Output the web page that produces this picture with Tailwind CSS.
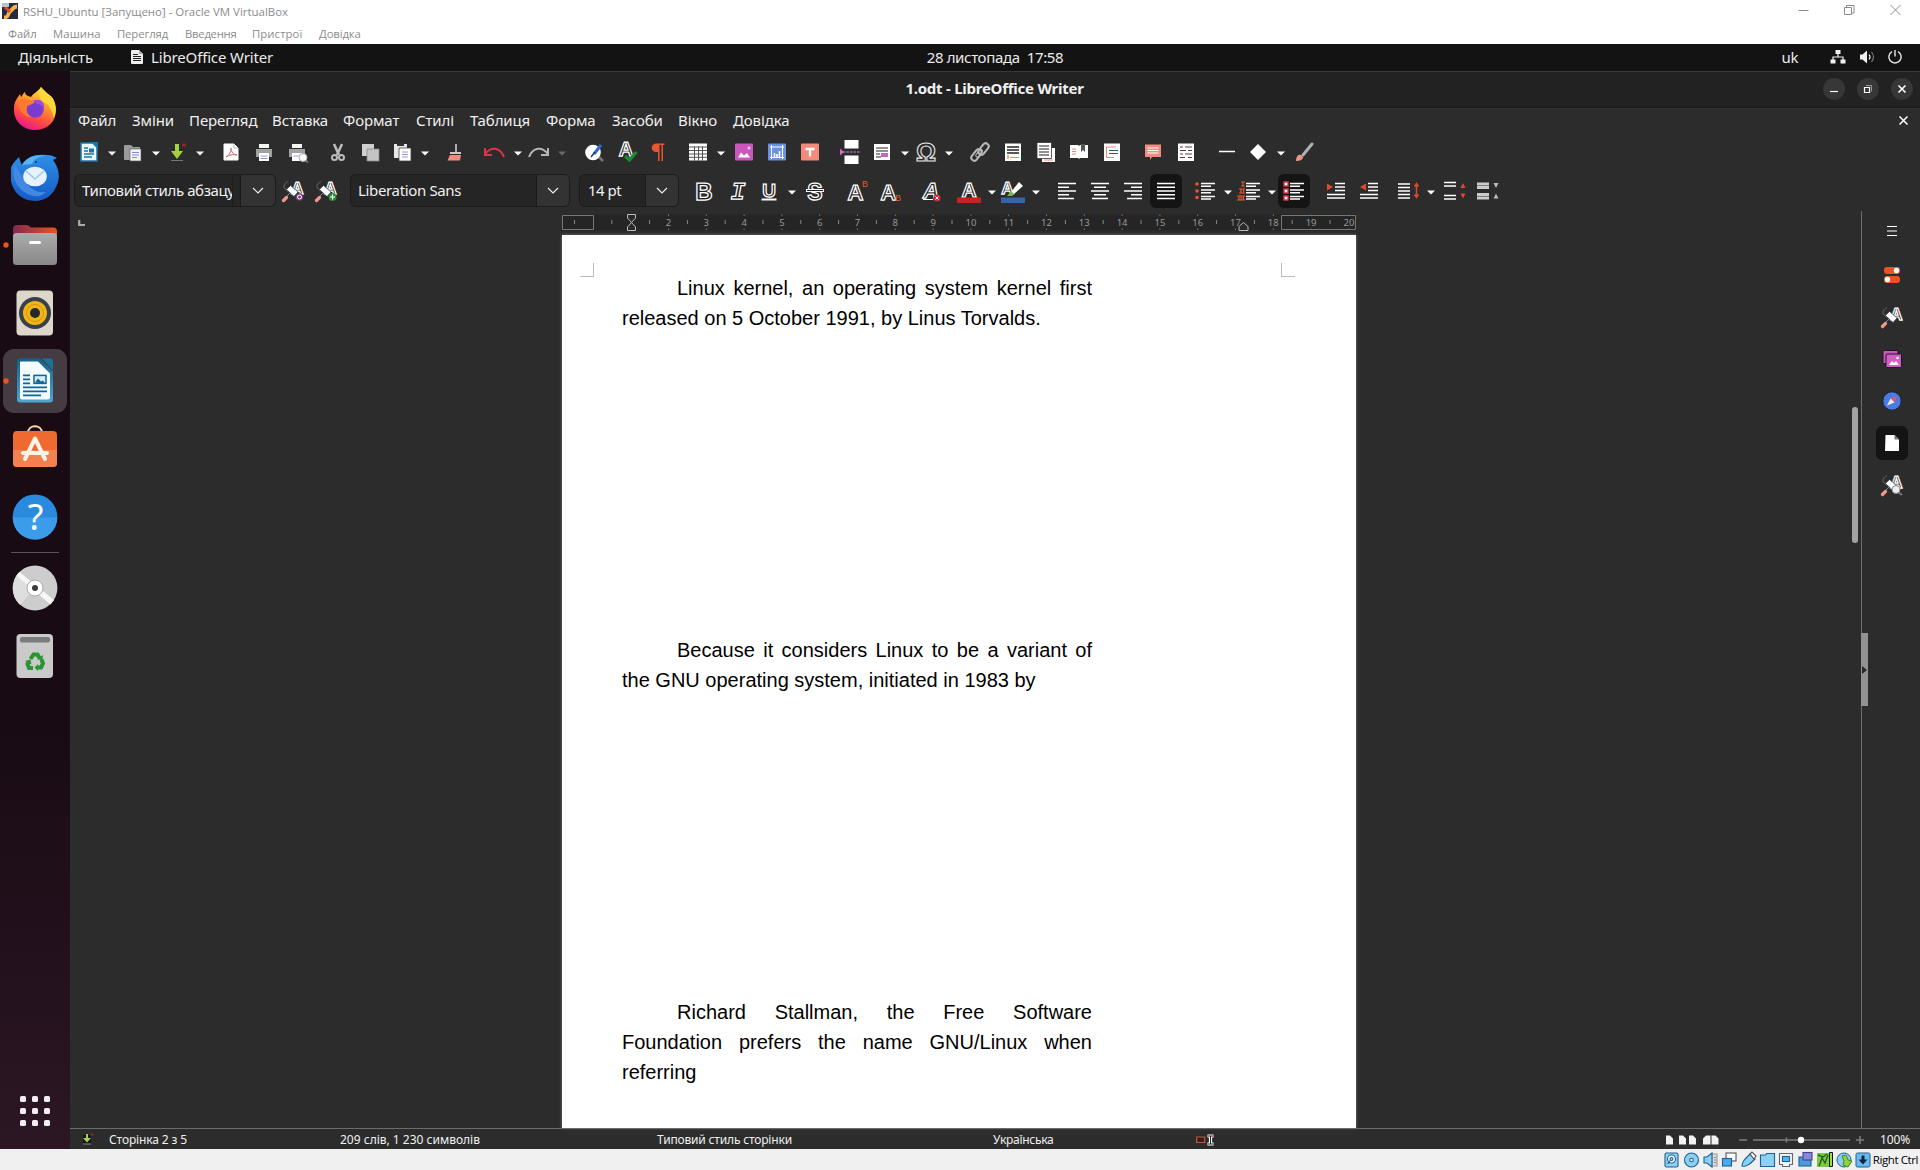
<!DOCTYPE html>
<html lang="uk">
<head>
<meta charset="utf-8">
<title>1.odt - LibreOffice Writer</title>
<script src="https://cdn.jsdelivr.net/npm/@tailwindcss/browser@4"></script>
</head>
<body class="w-[1920px] h-[1170px] overflow-hidden bg-[#2c2c2c] font-['Noto_Sans',sans-serif] flex flex-col">

<!-- Host window -->
<header class="h-[44px] shrink-0 bg-white text-[#8c8c8c] font-['Open_Sans',sans-serif] flex justify-between">
  <div>
    <div class="h-[24px] flex items-center pl-[2px] gap-[5px] text-[11.45px]">
      <svg class="w-4 h-4 -mt-[2px]" viewBox="0 0 16 16"><path d="M0 0h16v16H0z" fill="#26293f"/><path d="M2 14.500c6 0 3-4 6-6s3-5 7-5" fill="none" stroke="#f9b24a" stroke-width="3.800"/><path d="M3 4l5 5" stroke="#d9502c" stroke-width="3"/><path d="M0 0h7v4H0z" fill="#b9c3cf"/></svg>
      <span>RSHU_Ubuntu [Запущено] - Oracle VM VirtualBox</span>
    </div>
    <nav class="h-5 flex items-center pl-[8px] text-[11.3px] -tracking-[0.1px]">
      <span class="w-[45px]">Файл</span><span class="w-[64px] tracking-[0.1px]">Машина</span><span class="w-[68px]">Перегляд</span><span class="w-[67px] -tracking-[0.25px]">Введення</span><span class="w-[67px] tracking-[0.1px]">Пристрої</span><span>Довідка</span>
    </nav>
  </div>
  <div class="flex gap-[35px] pr-[19px] pt-[4px]">
    <svg class="w-[11px] h-[12px]" viewBox="0 0 11 12"><path d="M0.5 6.500h10" stroke="#8c8c8c"/></svg>
    <svg class="w-[11px] h-[12px]" viewBox="0 0 11 12"><path d="M.5 3.500h7v7h-7zM2.500 3.500v-2h7.500v7.500h-2.500" fill="none" stroke="#8c8c8c"/></svg>
    <svg class="w-[11px] h-[12px]" viewBox="0 0 11 12"><path d="M.5 1l10 10M10.500 1l-10 10" stroke="#8c8c8c"/></svg>
  </div>
</header>

<!-- GNOME top bar -->
<div class="h-[27px] shrink-0 bg-[#131313] text-[#ebebeb] text-[15px] grid grid-cols-[919px_152px_849px] items-center pb-[1px]">
  <div class="flex items-center pl-[18px]">
    <span class="w-[113px] -tracking-[0.1px]">Діяльність</span>
    <svg class="w-3 h-[14px] mr-2" viewBox="0 0 12 14"><path d="M0 1q0-1 1-1h7l4 4v9q0 1-1 1H1q-1 0-1-1z" fill="#eee"/><path d="M8 0v4h4" fill="#aaa"/><path d="M2 4.500h5M2 6.500h8M2 8.500h8M2 10.500h8" stroke="#222"/></svg>
    <span class="-tracking-[0.15px]">LibreOffice Writer</span>
  </div>
  <span class="text-center whitespace-pre -tracking-[0.35px]">28 листопада  17:58</span>
  <div class="flex items-center justify-end pr-[18px]">
    <span class="mr-[32px] -tracking-[0.4px]">uk</span>
    <svg class="w-4 h-[14px] mr-[14px]" viewBox="0 0 16 14"><path d="M5.500 0h5v4h-5zM0.500 9.500h5v4h-5zM10.500 9.500h5v4h-5z" fill="#f0f0f0"/><path d="M8 4v3M3 10V7h10v3" fill="none" stroke="#f0f0f0" stroke-width="1.200"/></svg>
    <svg class="w-[15px] h-[14px] mr-[13px]" viewBox="0 0 15 14"><path d="M0 4.500h2.500L7 .5v13L2.500 9.500H0z" fill="#f0f0f0"/><path d="M9 4.500q2 2.500 0 5" fill="none" stroke="#f0f0f0" stroke-width="1.200"/><path d="M11.500 2q4 5 0 10" fill="none" stroke="#777" stroke-width="1.200"/></svg>
    <svg class="w-[14px] h-[14px]" viewBox="0 0 14 14"><path d="M4 1.600a6.100 6.100 0 1 0 6 0M7 0v6.500" fill="none" stroke="#e8e8e8" stroke-width="1.400"/></svg>
  </div>
</div>

<div class="h-[1078px] shrink-0 flex">
  <!-- Dock -->
  <aside class="w-[70px] shrink-0 bg-linear-to-b from-[#180b13] from-60% to-[#2c1625] flex flex-col items-center">
    <svg class="w-[70px] h-[1078px]" viewBox="0 71 70 1078">
      <defs>
        <linearGradient id="ff" x1=".8" y1="0" x2=".35" y2="1"><stop offset="0" stop-color="#fff04a"/><stop offset=".4" stop-color="#ff9a26"/><stop offset=".75" stop-color="#ff4648"/><stop offset="1" stop-color="#e8188a"/></linearGradient>
        <linearGradient id="tb" x1="0" y1="0" x2="0" y2="1"><stop offset="0" stop-color="#2f8fe8"/><stop offset="1" stop-color="#145bc4"/></linearGradient>
        <linearGradient id="fl" x1="0" y1="0" x2="1" y2="0"><stop offset="0" stop-color="#7f2a50"/><stop offset="1" stop-color="#e95420"/></linearGradient>
        <linearGradient id="gr" x1="0" y1="0" x2="0" y2="1"><stop offset="0" stop-color="#ababab"/><stop offset="1" stop-color="#888"/></linearGradient>
        <linearGradient id="wr" x1="0" y1="0" x2="0" y2="1"><stop offset="0" stop-color="#155f89"/><stop offset="1" stop-color="#4ea6d0"/></linearGradient>
      </defs>
      <g>
        <path d="M41 87c2 3 8 8 11 10 5 7 5 17 1 24-4 6-11 9-18 9-12 0-21-9-21-20 0-6 1-9 4-13l2-3 1 3c2-2 2-4 4-5 0 2 1 3 3 4l3 1c2-4 7-5 10-10z" fill="url(#ff)"/>
        <path d="M41 87c2 3 9 8 12 12 3 6 4 12 1 19-2-8-5-14-12-17-3-4-4-9-1-14z" fill="#ffd93a"/>
        <circle cx="35" cy="109" r="8.800" fill="#7a3bd0"/><path d="M36 100c6-1 9 4 8 9-2-4-5-5-8-5z" fill="#a04ad8"/>
        <path d="M18 102c3-4 7-3 11-2 2 1 4 1 6 1-1 4-6 3-8 6-1 3 0 8 5 10-7 1-13-5-14-15z" fill="#ff7a2c"/>
      </g>
      <g>
        <path d="M11 168c1-4 5-8 8-11 1 4 2 6 3 8 4-6 10-10 17-10 7-1 14 0 18 3l-4 2c6 8 8 18 3 27-4 9-12 14-21 14-13 0-22-9-24-20z" fill="url(#tb)"/>
        <path d="M22 165c5-9 16-11 24-9-7 0-12 3-14 8z" fill="#57b4f5"/>
        <path d="M15 165c-5 14 4 28 19 31 5 1 9-1 12-4-8 1-14-2-19-8z" fill="#4488e4"/>
        <ellipse cx="35" cy="176.500" rx="11.800" ry="9.800" fill="#e6f3ff"/><path d="M26 171l9 8 9-8" fill="none" stroke="#9fc6ea" stroke-width="1.500"/><circle cx="36" cy="162" r="1" fill="#0b2e6a"/>
      </g>
      <path d="M13 229q0-4 4-4h9q2 0 3 1l2 1.500h22q4 0 4 4v10H13z" fill="url(#fl)"/><rect x="13" y="233" width="44" height="32" rx="3.500" fill="url(#gr)"/><path d="M30.500 242.500h9" stroke="#fff" stroke-width="3" stroke-linecap="round"/>
      <rect x="16.500" y="290.500" width="36.500" height="45" rx="4" fill="#dcd6cb"/><circle cx="35" cy="313" r="16" fill="#39404a"/><circle cx="35" cy="313" r="12" fill="#f0b619"/><circle cx="35" cy="313" r="5" fill="#222a2b"/><circle cx="35" cy="313" r="8.500" fill="none" stroke="#c99108" stroke-width=".8"/>
      <rect x="3" y="349" width="64" height="64" rx="11" fill="#453b42"/>
      <g transform="translate(0 -.6)"><path d="M20 359h20l13 13v28q0 3-3 3H20q-3 0-3-3v-38q0-3 3-3z" fill="url(#wr)"/><path d="M42 359h8q3 0 3 3v9z" fill="#1c7299"/><path d="M20 363q0-1 1-1h17l12 12v24q0 2-2 2H22q-2 0-2-2z" fill="#f2fbff"/><path d="M23 376h7M23 380h7M23 384h7M23 388h24M23 392h24M23 396h18" stroke="#0f6795" stroke-width="1.700"/><rect x="34" y="376" width="12" height="8" fill="#d3ecfa" stroke="#0f6795" stroke-width="1.500"/><path d="M35 383l3-4 3 3 2-1 2 3z" fill="#0f6795"/></g>
      <path d="M28 433c0-9 14-9 14 0" fill="none" stroke="#f7dcb7" stroke-width="2"/><rect x="13" y="431" width="44" height="36" rx="4" fill="#ee6a30"/><path d="M13 450h44v13q0 4-4 4H17q-4 0-4-4z" fill="#f3804f"/><path d="M25 459L35 438.500l10 20.500M23 453h24" fill="none" stroke="#fff3e6" stroke-width="4" stroke-linecap="round" stroke-linejoin="round"/>
      <circle cx="35" cy="516.700" r="22.300" fill="#2a8ade"/><path d="M12.700 517.500h44.600a22.300 22.300 0 0 1-44.600 0z" fill="#3b9dea"/><text x="35.500" y="530" text-anchor="middle" font-size="36" fill="#fff" class="font-['Noto_Sans',sans-serif]">?</text>
      <path d="M11 552.500h48" stroke="#5c5258"/>
      <circle cx="35" cy="588" r="22.400" fill="#cdcdcd"/><path d="M18 573.500L35 588 20 605a22.400 22.400 0 0 1-7-17q0-8 5-14.500z" fill="#dedede"/><path d="M16.500 575.500l3-3.500L54 600l-3.500 4.500z" fill="#f7f7f7"/><circle cx="35" cy="588" r="8" fill="#fff" stroke="#aaa89f"/><circle cx="35" cy="588" r="3" fill="#3c3c3c"/>
      <rect x="16.500" y="634" width="36.500" height="44" rx="4" fill="#cacaca"/><rect x="20" y="637" width="30" height="5.500" rx="2" fill="#7c7c7c"/><g fill="none" stroke="#2a9433" stroke-width="4"><path d="M30.500 659l3-4.500h4l2 3.500M41.500 659.500l1.500 4-2 4h-4M33 668h-4l-1.500-4 1.500-2.500"/></g><path d="M37 659.500l5.500.5.5-5zM38 664v7l-3.500-3.500zM25 661l5.500-1.500 1 5z" fill="#2a9433"/>
      <g fill="#e95420"><circle cx="6" cy="245" r="2.700"/><circle cx="6" cy="381" r="2.700"/></g>
      <g fill="#f3eef2"><rect x="20" y="1096" width="6" height="6" rx="1.500"/><rect x="32" y="1096" width="6" height="6" rx="1.500"/><rect x="44" y="1096" width="6" height="6" rx="1.500"/><rect x="20" y="1108" width="6" height="6" rx="1.500"/><rect x="32" y="1108" width="6" height="6" rx="1.500"/><rect x="44" y="1108" width="6" height="6" rx="1.500"/><rect x="20" y="1120" width="6" height="6" rx="1.500"/><rect x="32" y="1120" width="6" height="6" rx="1.500"/><rect x="44" y="1120" width="6" height="6" rx="1.500"/></g>
    </svg>
  </aside>

  <!-- Writer window -->
  <main class="w-[1850px] flex flex-col text-[#f0f0f0]">
    <div class="h-[37px] shrink-0 bg-[#222] border-t border-t-[#383838] border-b border-b-[#191919] grid grid-cols-[1740px_110px] items-center">
      <h1 class="text-center pl-[109px] text-[15px] font-bold -tracking-[0.25px] -mt-[3px]">1.odt - LibreOffice Writer</h1>
      <div class="flex gap-[12px] pl-[13px] -mt-px">
        <svg class="w-[22px] h-[22px]" viewBox="0 0 22 22"><circle cx="11" cy="11" r="11" fill="#373737"/><path d="M7 13.500h8" stroke="#fff" stroke-width="1.200"/></svg>
        <svg class="w-[22px] h-[22px]" viewBox="0 0 22 22"><circle cx="11" cy="11" r="11" fill="#373737"/><path d="M7.500 9.500h5v5h-5z" fill="none" stroke="#fff" stroke-width="1.200"/><path d="M9 7.500h5.500v6" fill="none" stroke="#999"/></svg>
        <svg class="w-[22px] h-[22px]" viewBox="0 0 22 22"><circle cx="11" cy="11" r="11" fill="#373737"/><path d="M7.500 7.500l7 7M14.500 7.500l-7 7" stroke="#fff" stroke-width="1.600"/></svg>
      </div>
    </div>
    <div class="h-[26px] shrink-0 flex items-center justify-between border-t border-t-[#323232] pb-[2px]">
      <nav class="flex pl-[8px] text-[15px] -tracking-[0.12px]">
        <span class="w-[54px]">Файл</span><span class="w-[57px]">Зміни</span><span class="w-[83px]">Перегляд</span><span class="w-[71px]">Вставка</span><span class="w-[73px]">Формат</span><span class="w-[54px]">Стилі</span><span class="w-[76px]">Таблиця</span><span class="w-[66px]">Форма</span><span class="w-[66px]">Засоби</span><span class="w-[55px]">Вікно</span><span>Довідка</span>
      </nav>
      <svg class="w-[9px] h-[9px] mr-[12px]" viewBox="0 0 9 9"><path d="M.5 .5l8 8M8.500 .5l-8 8" stroke="#fff" stroke-width="1.500"/></svg>
    </div>
    <div id="standardBar" class="h-[37px] shrink-0 flex items-center pb-[2px]"></div>
    <div class="h-[40px] shrink-0 flex items-center pb-px pl-[4px]">
      <div class="w-[202px] h-[33px] rounded-md border border-[#1b1b1b] bg-[#252525] flex text-[15px] items-center overflow-hidden">
        <span class="w-[158px] h-full pl-[7px] pt-[5px] leading-[20px] border-r border-[#1b1b1b] whitespace-nowrap overflow-hidden -tracking-[0.4px]">Типовий стиль абзацу</span>
        <span class="w-[8px] h-full border-r border-[#1b1b1b]"></span>
        <span class="flex-1 h-full bg-[#333] flex items-center justify-center"><svg class="w-3 h-2" viewBox="0 0 12 8"><path d="M1 1l5 5 5-5" fill="none" stroke="#eee" stroke-width="1.200"/></svg></span>
      </div>
      <div id="styleButtons" class="flex w-[74px] items-center"></div>
      <div class="w-[220px] h-[33px] rounded-md border border-[#1b1b1b] bg-[#252525] flex text-[15px] items-center overflow-hidden">
        <span class="w-[185px] pl-[7px] -tracking-[0.35px]">Liberation Sans</span>
        <span class="flex-1 h-full bg-[#333] border-l border-[#1b1b1b] flex items-center justify-center"><svg class="w-3 h-2" viewBox="0 0 12 8"><path d="M1 1l5 5 5-5" fill="none" stroke="#eee" stroke-width="1.200"/></svg></span>
      </div>
      <div class="ml-[9px] w-[100px] h-[33px] rounded-md border border-[#1b1b1b] bg-[#252525] flex text-[15px] items-center overflow-hidden">
        <span class="w-[65px] pl-[8px] -tracking-[0.5px]">14 pt</span>
        <span class="flex-1 h-full bg-[#333] border-l border-[#1b1b1b] flex items-center justify-center"><svg class="w-3 h-2" viewBox="0 0 12 8"><path d="M1 1l5 5 5-5" fill="none" stroke="#eee" stroke-width="1.200"/></svg></span>
      </div>
      <div id="formatBar" class="flex items-center"></div>
    </div>

    <div class="h-[917px] shrink-0 flex">
      <div class="w-[1791px] shrink-0 flex">
        <svg class="w-[492px] h-[20px] shrink-0 " viewBox="70 211 492 20"><path d="M79.200 220v5H85" fill="none" stroke="#aaa" stroke-width="2.200"/></svg>
        <div class="w-[794px] shrink-0 flex flex-col">
          <svg id="ruler" class="w-[794px] h-[24px] shrink-0" viewBox="562 211 794 24"></svg>
          <article class="flex-1 bg-white text-black font-['Liberation_Sans',Arial,sans-serif] text-[20px] leading-[30px] overflow-hidden shadow-[0_0_3px_#777]">
            <div class="flex justify-between pt-[28px] px-[18px]">
              <span class="w-[14px] h-[14px] border-r border-b border-[#bbb]"></span>
              <span class="w-[14px] h-[14px] border-l border-b border-[#bbb] mr-[43px]"></span>
            </div>
            <p class="ml-[60px] w-[470px] h-[362px] -mt-[4px] indent-[55px] text-justify">Linux kernel, an operating system kernel first released on 5 October 1991, by Linus Torvalds.</p>
            <p class="ml-[60px] w-[470px] h-[362px] indent-[55px] text-justify">Because it considers Linux to be a variant of the GNU operating system, initiated in 1983 by</p>
            <p class="ml-[60px] w-[470px] indent-[55px] text-justify">Richard Stallman, the Free Software Foundation prefers the name GNU/Linux when referring</p>
          </article>
        </div>
        <div class="flex-1 flex justify-end pr-[3px]"><div class="w-[6px] h-[136px] mt-[196px] rounded-full bg-[#a3a3a3]"></div></div>
      </div>
      <div class="w-[7px] border-l border-[#6e6e6e] pt-[422px] shrink-0">
        <div class="w-[7px] h-[73px] -ml-px bg-[#929292] flex items-center"><svg class="w-[7px] h-[8px]" viewBox="0 0 7 8"><path d="M1 0l5 4-5 4z" fill="#2a2a2a"/></svg></div>
      </div>
      <div id="sidebar" class="flex-1 flex flex-col items-center pr-[4px] pt-[2px]"></div>
    </div>

    <footer class="h-[21px] shrink-0 border-t border-[#6b6b6b] grid grid-cols-[39px_231px_317px_336px_202px_460px_225px_1fr] items-center text-[12px] pt-px">
      <svg class="w-[14px] h-[14px] ml-[10px] -mt-px" viewBox="0 0 14 14"><path d="M3 3h8v9H3z" fill="#161616"/><path d="M6 2h2v4h3l-4 4.500L3 6h3z" fill="#9fd35a"/><path d="M3 12h8" stroke="#888"/><circle cx="12" cy="2.500" r="1.500" fill="#7c2a2a"/></svg>
      <span class="-tracking-[0.12px]">Сторінка 2 з 5</span>
      <span>209 слів, 1 230 символів</span>
      <span class="-tracking-[0.17px]">Типовий стиль сторінки</span>
      <span class="-tracking-[0.3px]">Українська</span>
      <svg class="w-[20px] h-[12px] ml-px" viewBox="0 0 20 12"><path d="M.7 3h8v5.500h-8z" fill="#3a1d18" stroke="#c4593f" stroke-width="1.200"/><path d="M11.500 2h6M11.500 10h6M14.500 2v8" fill="none" stroke="#fff" stroke-width="3.200"/><path d="M12 2h5M12 10h5M14.500 2v8" fill="none" stroke="#222" stroke-width="1"/></svg>
      <svg class="w-[225px] h-[16px] -ml-[1px] -mt-px" viewBox="1654 1131.500 225 16">
        <g fill="#f2f2f2"><path d="M1666 1136h4l3 3v6h-7zM1679 1136h4l3 3v6h-7zM1689 1136h4l3 3v6h-7zM1703 1139l3-3h4.500v9h-7.500zM1711.500 1136h4l3 3v6h-7z"/></g>
        <path d="M1739 1140.500h8M1753 1140.500h97M1786.500 1138v5M1856 1140.500h8M1860 1136.500v8" stroke="#7d7d7d" stroke-width="1.500"/><circle cx="1801" cy="1140.500" r="3.200" fill="#fff"/>
      </svg>
      <span class="-tracking-[0.15px]">100%</span>
    </footer>
  </main>
</div>

<!-- Host status bar -->
<footer class="h-[21px] shrink-0 bg-[#f0f0f0] flex items-center justify-end pr-[2px]">
  <svg class="w-[208px] h-[18px] mr-[2px]" viewBox="1663 1151 208 18">
    <g stroke="#21618f" fill="#8bd0f7" stroke-width="1.100">
      <rect x="1665" y="1153" width="13" height="14" rx="1.500"/><circle cx="1671.500" cy="1159" r="4" fill="#fff"/><path d="M1671.500 1159l-4 5" /><circle cx="1671.500" cy="1159" r="1.500"/>
      <circle cx="1691.500" cy="1160" r="7"/><circle cx="1691.500" cy="1160" r="1.800" fill="#fff"/>
      <path d="M1717 1154h-5v12h5z" fill="#ddd" stroke="#999"/><path d="M1704 1157h3l5-4v14l-5-4h-3z"/><path d="M1714 1157.500h2M1714 1160h2M1714 1162.500h2" stroke="#888"/>
      <rect x="1726" y="1153" width="10" height="8" fill="#fff" stroke="#555"/><rect x="1722.500" y="1158.500" width="9" height="7.500" fill="#4aa9f0"/>
      <path d="M1742 1166c0-4 2-6 8-12l5 5c-6 6-9 8-13 7z"/><path d="M1750 1154l2-2 4 4-2 3z" fill="#fff" stroke="#555"/>
      <path d="M1760.500 1155h5l1-1.500h8v13h-14z"/>
      <path d="M1779.500 1153.500h13v11h-3v2h-7v-2h-3z" fill="#eef6fb" stroke="#666"/><rect x="1782.500" y="1156.500" width="7" height="5" fill="#5cb4ee"/>
      <rect x="1799" y="1157" width="12" height="9" fill="#4a9cdd"/><rect x="1803" y="1152.500" width="9" height="7.500" fill="#8a86dc" stroke="#444391"/>
    </g>
    <path d="M1817 1153h13v14h-13z" fill="#7ac943"/><path d="M1829.500 1152.500h3v14h-3z" fill="#9be03b" stroke="#111"/><path d="M1819 1166l3-8 3 5 3-8M1818 1155l5 2 4-3" stroke="#25601a" fill="none" stroke-width="1.400"/>
    <circle cx="1844" cy="1160" r="7" fill="#8bd0f7" stroke="#21618f"/><path d="M1842 1156l4-1 2 5 4 1-4 6-5-2 1-4z" fill="#8fd03f" stroke="#3f8a22"/>
    <rect x="1856" y="1153" width="14" height="14" rx="1.500" fill="#68baf2" stroke="#21618f"/><path d="M1861.500 1155.500h3v4h3l-4.500 5-4.500-5h3z" fill="#11273c"/>
  </svg>
  <span class="font-['Open_Sans',sans-serif] text-[11.5px] -tracking-[0.42px] text-black whitespace-nowrap">Right Ctrl</span>
</footer>

<script>
// Each icon is drawn in a 24 x 24 box.
const W = '#fff';
const letter = (t, x, y, s, extra = '') => `<text x="${x}" y="${y}" font-size="${s}" text-anchor="middle" font-family="Liberation Sans" font-weight="bold" fill="#222" stroke="#fff" stroke-width="1.25" ${extra}>${t}</text>`;
const lines = (list, color = W, width = 1.6) => `<path d="${list.map(([x, y, w]) => `M${x} ${y}h${w}`).join('')}" stroke="${color}" stroke-width="${width}" fill="none"/>`;
const roller = letter('A', 16.5, 14.5, 17) + '<path d="M7 2.500q-5 3-4 6l4 4" fill="none" stroke="#555" stroke-width="1.300"/><path d="M5.500 10.500l4-4 7.500 6.500-4 4.500z" fill="#fff" stroke="#2c2c2c" stroke-width=".6"/><path d="M2.500 21.500l3-3" stroke="#f4978c" stroke-width="3.200" stroke-linecap="round"/><path d="M6 17l3-3" stroke="#888"/>';
const I = {
  arrow: '<path d="M1 10h8l-4 4z" fill="#fff"/>',
  arrowDim: '<path d="M1 10h8l-4 4z" fill="#6a6a6a"/>',
  fresh: '<path d="M4 3h12l4 4v14H4z" fill="#eaf6fd" stroke="#1c75a8" stroke-width="1.500"/><path d="M14 2h7v7z" fill="#1c75a8"/>' + lines([[7,8,4],[7,11,4],[7,14,10],[7,17,8]], '#1c75a8', 1.5) + '<path d="M12 8.500h5v4h-5z" fill="#1c75a8"/>',
  open: '<path d="M3 6q0-1 1-1h6l2 2h7v13H4q-1 0-1-1z" fill="#9b9b9b"/><path d="M9 9h11v12H9z" fill="#f3f3f3" stroke="#555" stroke-width=".6"/>' + lines([[11,12.500,7],[11,15,7],[11,17.500,5]], '#8b8bd0', 1),
  save: '<path d="M10 4h4v7h4l-6 8-6-8h4z" fill="#a5d23c"/><path d="M6 20.500h12" stroke="#777"/><circle cx="19" cy="5" r="1.800" fill="#a8202e"/>',
  pdf: '<path d="M5 4h10l4 4v12H5z" fill="#fff" stroke="#fff" stroke-linejoin="round"/><path d="M15 4v4h4" fill="none" stroke="#bbb"/><path d="M7 17c4-2 5-6 5-9 0 4 3 7 6 7-4-1-8 0-11 2z" fill="none" stroke="#cf6b73"/>',
  print: '<path d="M7 4h10v4H7z" fill="#f5f5f5"/><path d="M4 9h16v8H4z" fill="#a2a2a2"/><path d="M7 13h10v8H7z" fill="#fff"/>' + lines([[8.500,16,7],[8.500,18.500,7]], '#9a9ad8', 1),
  preview: '<path d="M6 4h10v4H6z" fill="#f5f5f5"/><path d="M3 9h16v8H3z" fill="#a2a2a2"/><path d="M6 13h10v8H6z" fill="#fff"/>' + lines([[7.500,16,5]], '#9a9ad8', 1) + '<path d="M19 20l3 2.500" stroke="#777" stroke-width="2"/><circle cx="17" cy="17.500" r="4" fill="#fafafa" stroke="#aaa"/>',
  cut: '<path d="M8 4l5 11M16 4l-5 11" stroke="#b9b9b9" stroke-width="2.600"/><circle cx="8.500" cy="17.500" r="2.500" fill="none" stroke="#b9b9b9" stroke-width="2"/><circle cx="15.500" cy="17.500" r="2.500" fill="none" stroke="#b9b9b9" stroke-width="2"/>',
  copy: '<path d="M3 4h12v12H3z" fill="#d0d0d0"/><path d="M8 9h12v12H8z" fill="#c4c4c4" stroke="#8c8c8c" stroke-width=".8"/>',
  paste: '<path d="M4 4h13v14H4z" fill="#e8e8e8"/><path d="M7 3h7v3H7z" fill="#333"/><path d="M9 8h12v13H9z" fill="#fff" stroke="#444" stroke-width=".8"/>' + lines([[12,12,6],[12,14.500,6],[12,17,6]], '#9c9cd0', 1),
  clone: '<path d="M13 4v8" stroke="#bbb" stroke-width="1.800"/><path d="M7 13h11" stroke="#ccc" stroke-width="2"/><path d="M7 15h11l-1 5.500H4.500z" fill="#f58b80"/>',
  undo: '<path d="M22 17C18 7 9 6 3 14M3 8v7h7" fill="none" stroke="#dc3545" stroke-width="2"/>',
  redo: '<path d="M2 17C6 7 15 6 21 14M21 8v7h-7" fill="none" stroke="#b5b5b5" stroke-width="2"/>',
  find: '<path d="M16 16l5 5" stroke="#777" stroke-width="2.500"/><circle cx="11" cy="12.500" r="7.800" fill="#fff"/><path d="M12 14l7-9" stroke="#3468d0" stroke-width="3"/><path d="M9 17l4-5" stroke="#1d3a78" stroke-width="1.400"/>',
  spell: letter('A', 11, 16, 20) + '<path d="M10 16l4.500 4 7-8" fill="none" stroke="#1b8a30" stroke-width="3.200"/>',
  pil: '<path d="M17 3.500H10a4.300 4.300 0 0 0 0 8.600h2V21h1.500V5h2v16H17V5h1.500V3.500z" fill="#e8562f"/>',
  table: '<path d="M3 3.500h18v17H3z" fill="#fff"/><path d="M8.500 6.500v14M12.500 6.500v14M16.500 6.500v14M3 7h18M3 10.500h18M3 14h18M3 17.300h18" stroke="#555"/>',
  image: '<rect x="3" y="3.500" width="18" height="17" rx="1" fill="#ca56be"/><path d="M6 17.500l3-5 3 3 3-2.500 3 4.500z" fill="#fff"/><circle cx="17" cy="8" r="1.500" fill="#ffd0f5"/>',
  chart: '<rect x="3" y="3.500" width="18" height="17" rx="1" fill="#6b92dc"/><path d="M6.500 5v14M17.500 5v14M5 7h14M5 17.500h14" stroke="#fff"/><path d="M9.500 17v-4M12 17v-3M14.500 17v-6" stroke="#fff" stroke-width="1.600"/>',
  text: '<rect x="3" y="3.500" width="18" height="17" rx="1" fill="#f48a7a"/><path d="M7.500 9h9M12 9v7.500" stroke="#fff" stroke-width="2.400"/>',
  brk: '<path d="M5.500 0h14v8.500h-14zM5.500 15.500h14v8.500h-14z" fill="#fff"/><path d="M4 12h17" stroke="#d788cc" stroke-dasharray="2.500 1"/><path d="M1 8.500l4 3.500-4 3.500z" fill="#d36fc6"/>',
  field: '<path d="M4 4h16v16H4z" fill="#fff"/>' + lines([[6,8,12],[6,11,12],[6,14,4],[6,17,5]], '#222', 1.2) + '<path d="M11 13h7v4h-7z" fill="#c06cba"/>',
  omega: '<text x="12" y="21" font-size="25" text-anchor="middle" font-family="Liberation Sans" font-weight="bold" fill="#2c2c2c" stroke="#e4e4e4" stroke-width="1.100">Ω</text>',
  link: '<g fill="none" stroke="#b8b8b8" stroke-width="2" transform="rotate(-52 12 12)"><rect x="1" y="8" width="13" height="6" rx="3"/><rect x="10" y="10" width="13" height="6" rx="3"/><rect x="6" y="10.500" width="9" height="3" rx="1.500" stroke-width="1"/></g>',
  foot: '<path d="M4 3.500h16v17.500H4z" fill="#fff"/>' + lines([[6,7,12],[6,10,12],[6,13,12]], '#222', 1.3) + lines([[9,17.500,9]], '#f08a7a', 1.2) + '<path d="M7 15v4" stroke="#e8562f"/>',
  end: '<path d="M8 8h13v14H8z" fill="#fff"/><path d="M3 2.500h14.500v16H3z" fill="#fff" stroke="#333" stroke-width=".8"/>' + lines([[5,6,10],[5,9,10],[5,12,10],[5,15,10]], '#222', 1.2) + lines([[10,20,9]], '#f08a7a', 1),
  book: '<path d="M3 5h8l1 1 1-1h8v13h-8l-1 1-1-1H3z" fill="#fff"/><path d="M14 4h4v8l-2-2-2 2z" fill="#555"/>' + lines([[5,9,4],[5,11.500,4],[5,14,4]], '#e88', 1),
  xref: '<path d="M4 3.500h16v17.500H4z" fill="#fff"/>' + lines([[6,7,10],[6,17.500,8]], '#f08a7a', 1) + lines([[9,10.500,9],[9,13.500,9]], '#2a6071', 1.2) + '<path d="M6.500 7v10" stroke="#f08a7a"/>',
  note: '<path d="M4 4.500h16v12.500h-9l-2 3v-3H4z" fill="#f28c80"/>' + lines([[6.500,8,11],[6.500,10.500,11],[6.500,13,11]], '#fff', 1.2),
  track: '<path d="M4 3.500h16v17.500H4z" fill="#fff"/>' + lines([[6,7,3],[11,7,7],[6,10.500,6],[14,10.500,4],[6,14,3],[11,14,7],[6,17.500,5],[14,17.500,4]], '#5c3a42', 1.2),
  line: '<path d="M4 11.500h16" stroke="#fff" stroke-width="1.500"/>',
  shape: '<path d="M12 4l8 8-8 8-8-8z" fill="#fff"/>',
  draw: '<path d="M20 4l-9 11" stroke="#aab2b2" stroke-width="3" stroke-linecap="round"/><path d="M4 21c0-4 2-7 5-6l2 2c0 3-4 4-7 4z" fill="#f2938a"/>',
  styUpd: roller + '<circle cx="18.500" cy="18" r="3.800" fill="#7d3a78"/><circle cx="18.500" cy="18" r="2" fill="none" stroke="#fff"/>',
  styNew: roller + '<circle cx="18.500" cy="18" r="4" fill="#2b8c35"/><path d="M18.500 15.500v5M16 18h5" stroke="#fff" stroke-width="1.200"/>',
  bold: letter('B', 12, 20.5, 24),
  italic: `<text x="12" y="20" font-size="24" text-anchor="middle" font-family="Liberation Mono" font-weight="bold" font-style="italic" fill="#222" stroke="#fff" stroke-width="1.250">I</text>`,
  under: letter('U', 12, 17.5, 19) + '<path d="M4.500 20.500h15" stroke="#fff" stroke-width="2"/>',
  strike: letter('S', 12, 20.5, 23) + '<path d="M3 11.500h18" stroke="#fff" stroke-width="3"/><path d="M4 11.500h16" stroke="#222" stroke-width="1"/>',
  sup: letter('A', 10.5, 20.5, 22) + '<text x="17" y="8" font-size="9" font-family="Liberation Sans" fill="#e8562f">B</text>',
  sub: letter('A', 10.5, 20.5, 22) + '<text x="17" y="22" font-size="9" font-family="Liberation Sans" fill="#e8562f">B</text>',
  clear: letter('A', 12, 18.5, 22, 'font-style="italic"') + '<path d="M4 20.500h10" stroke="#fff"/><circle cx="18" cy="19" r="3.500" fill="#d02a3a"/><path d="M16.500 17.500l3 3M19.500 17.500l-3 3" stroke="#fff"/>',
  color: letter('A', 12, 18, 21) + '<path d="M0 18.500h24v5.500H0z" fill="#c9211e"/>',
  hilite: letter('A', 6.5, 14.5, 17) + '<path d="M10 13l8-10 4 4-9 8z" fill="#fff"/><path d="M6 17l4-5 3 3-2 2z" fill="#7ab648"/><path d="M0 18.500h24v5.500H0z" fill="#3565a5"/>',
  left: lines([[3,4.500,18],[3,8.300,11],[3,12,18],[3,15.800,11],[3,19.500,16]]),
  center: lines([[3,4.500,18],[6,8.300,12],[3,12,18],[6,15.800,12],[4,19.500,16]]),
  right: lines([[3,4.500,18],[10,8.300,11],[3,12,18],[10,15.800,11],[6,19.500,15]]),
  just: lines([[3,4.500,18],[3,8.300,18],[3,12,18],[3,15.800,18],[3,19.500,18]]),
  bul: lines([[8,4.500,14],[8,7.300,10],[8,11,14],[8,13.800,10],[8,17.500,14],[8,20,10]], W, 1.5) + '<g fill="#e8562f"><circle cx="4" cy="5" r="1.800"/><circle cx="4" cy="12" r="1.800"/><circle cx="4" cy="18.500" r="1.800"/></g>',
  num: lines([[9,4.500,14],[9,7.300,10],[9,11,14],[9,13.800,10],[9,17.500,14],[9,20,10]], W, 1.5) + '<path d="M4 3h4M4 7h4M6 3v4M2 10h6M2 14h6M4 10v4M6.500 10v4M0 17h8M0 21h8M2 17v4M4.200 17v4M6.400 17v4" stroke="#e8562f" stroke-width="1.200"/>',
  outl: lines([[8,4.500,14],[8,7.300,10],[8,11,14],[8,13.800,10],[8,17.500,14],[8,20,10]], W, 1.5) + '<path d="M2 3h4v4H2zM2 10h4v4H2zM2 17h4v4H2z" fill="#fff" stroke="#dc3545" stroke-width="1.400"/>',
  indM: lines([[12,4.500,10],[12,8,10],[12,11.500,10],[4,15.500,18],[4,19,18]]) + '<path d="M4 4.500l6 3.500-6 3.500z" fill="#dc4a2f"/>',
  indL: lines([[12,4.500,10],[12,8,10],[12,11.500,10],[4,15.500,18],[4,19,18]]) + '<path d="M10 4.500L4 8l6 3.500z" fill="#dc4a2f"/>',
  spc: lines([[1,5,12],[1,8.500,12],[1,12,12],[1,15.500,12],[1,19,12]]) + '<path d="M19.500 5v13M17.500 7.500l2-3 2 3M17.500 15.500l2 3 2-3" fill="none" stroke="#dc4a2f" stroke-width="1.500"/>',
  parM: lines([[1,3.500,12],[1,7,12],[1,16.500,12],[1,20,12]]) + '<path d="M20 4l2.500 5h-5zM20 19.500l2.500-5h-5z" fill="#dc4a2f"/>',
  parL: lines([[1,5,12],[1,8.500,12],[1,15.500,12],[1,19,12]], '#ccc', 3) + '<path d="M20 9l2.500-5h-5zM20 14.500l2.500 5h-5z" fill="#bbb"/>',
  menu: '<path d="M7 7.500h10M7 12h10M7 16.500h10" stroke="#fff" stroke-width="1.200"/>',
  props: '<rect x="4" y="4" width="16" height="7" rx="3" fill="#e95420"/><rect x="4" y="13" width="16" height="7" rx="3" fill="#e95420"/><circle cx="16.500" cy="7.500" r="2.700" fill="#fff"/><circle cx="7.500" cy="16.500" r="2.700" fill="#fff"/>',
  styles: roller,
  gallery: '<rect x="3" y="3.500" width="15" height="13" rx="1" fill="#ca56be" stroke="#1a1a1a"/><rect x="6" y="7" width="15.500" height="13.500" rx="1" fill="#d160c5" stroke="#1a1a1a"/><path d="M9 18l3-4 2 2 2-2 3 4z" fill="#fff"/><circle cx="17.500" cy="11" r="1.200" fill="#fff"/>',
  nav: '<circle cx="12" cy="12" r="9.200" fill="#4c7be0" stroke="#16233f"/><path d="M17 7l-3 7-4-4z" fill="#e2567c"/><path d="M7 16.500l3.500-7 4 4z" fill="#e8f0ff"/>',
  page: '<path d="M5.500 4h9l4.500 4.500V20H5z" fill="#fff"/><path d="M14.500 4v4.500H19z" fill="#777"/>',
  inspect: roller + '<path d="M18 19l4 3" stroke="#777" stroke-width="2"/><circle cx="16" cy="16.500" r="4" fill="#eee" stroke="#888"/>',
};
function button(name, on) {
  const small = name.startsWith('arrow'), b = document.createElement('button');
  b.className = on ? 'w-[32px] h-[34px] rounded-md bg-[#141414] flex items-center justify-center shrink-0' : small ? 'w-[10px] h-[24px] shrink-0' : 'w-[24px] h-[24px] shrink-0';
  b.innerHTML = small ? `<svg class="w-[10px] h-[24px]" viewBox="0 -1.500 10 24">${I[name]}</svg>` : `<svg class="w-[24px] h-[24px] overflow-visible" viewBox="0 0 24 24">${I[name]}</svg>`;
  return [b, on ? 32 : small ? 10 : 24];
}
// items: [centre x, icon, pressed]; the gap before a button follows from the previous one's end.
function bar(id, start, items) {
  let end = start;
  for (const [c, name, on] of items) {
    const [b, w] = button(name, on);
    b.style.marginLeft = (c - w / 2 - end) + 'px';
    end = c + w / 2;
    document.getElementById(id).append(b);
  }
}
bar('standardBar', 70, [[89,'fresh'],[111.5,'arrow'],[133,'open'],[155.5,'arrow'],[177,'save'],[199.5,'arrow'],[231,'pdf'],[264,'print'],[298,'preview'],[337.5,'cut'],[371,'copy'],[402,'paste'],[424.5,'arrow'],[455,'clone'],[494,'undo'],[517.5,'arrow'],[539,'redo'],[561.5,'arrowDim'],[594,'find'],[627,'spell'],[658,'pil'],[698,'table'],[720.5,'arrow'],[744,'image'],[777,'chart'],[810,'text'],[851,'brk'],[882,'field'],[904.5,'arrow'],[926,'omega'],[948.5,'arrow'],[980,'link'],[1013,'foot'],[1046,'end'],[1079,'book'],[1112,'xref'],[1153,'note'],[1186,'track'],[1227,'line'],[1258,'shape'],[1280.5,'arrow'],[1304,'draw']]);
bar('styleButtons', 276, [[293,'styUpd'],[326,'styNew']]);
bar('formatBar', 679, [[704,'bold'],[738,'italic'],[769,'under'],[791.5,'arrow'],[815,'strike'],[857,'sup'],[890,'sub'],[931,'clear'],[969,'color'],[991.5,'arrow'],[1013,'hilite'],[1035.5,'arrow'],[1067,'left'],[1100,'center'],[1133,'right'],[1166,'just',1],[1205,'bul'],[1227.5,'arrow'],[1249,'num'],[1271.5,'arrow'],[1294,'outl',1],[1335,'indM'],[1368,'indL'],[1409,'spc'],[1430.5,'arrow'],[1455,'parM'],[1488,'parL']]);
// Sidebar decks, [centre y, icon, pressed].
let y = 213;
for (const [c, name, on] of [[230.5,'menu'],[275,'props'],[317,'styles'],[359,'gallery'],[401,'nav'],[443,'page',1],[485,'inspect']]) {
  const [b] = button(name, on), h = on ? 34 : 24;
  b.style.marginTop = (c - h / 2 - y) + 'px';
  y = c + h / 2;
  document.getElementById('sidebar').append(b);
}
// Ruler in centimetres: 0 at x = 593, 37.8 px each.
let r = '<path d="M562 214.500h794v16H562z" fill="#252525"/>';
const X = n => 592.9 + 37.8 * n;
for (let n = 0; n <= 20; n++) {
  if (n) r += n === 1 ? '' : `<text x="${X(n)}" y="225.500" font-size="9.500" text-anchor="middle" fill="#989898">${n}</text><path d="M${X(n)} 214.500v1.500M${X(n)} 228.500v1.500" stroke="#777"/>`;
  if (n < 20) r += `<path d="M${X(n) + 18.9} 220v4" stroke="#888"/>`;
}
r += '<path d="M574.500 220v4" stroke="#888"/><path d="M562.500 215.500h31v14h-31zM1281.500 215.500h74v14h-74z" fill="none" stroke="#777"/><path d="M627.500 214.500h8v3.500l-4 4.500 4 4.500v3.500h-8V227l4-4.500-4-4.500z" fill="#2a2a2a" stroke="#bbb"/><path d="M1239 230.500v-4l4.500-4 4.500 4v4z" fill="#2a2a2a" stroke="#bbb"/>';
document.getElementById('ruler').innerHTML = r;
</script>
</body>
</html>
